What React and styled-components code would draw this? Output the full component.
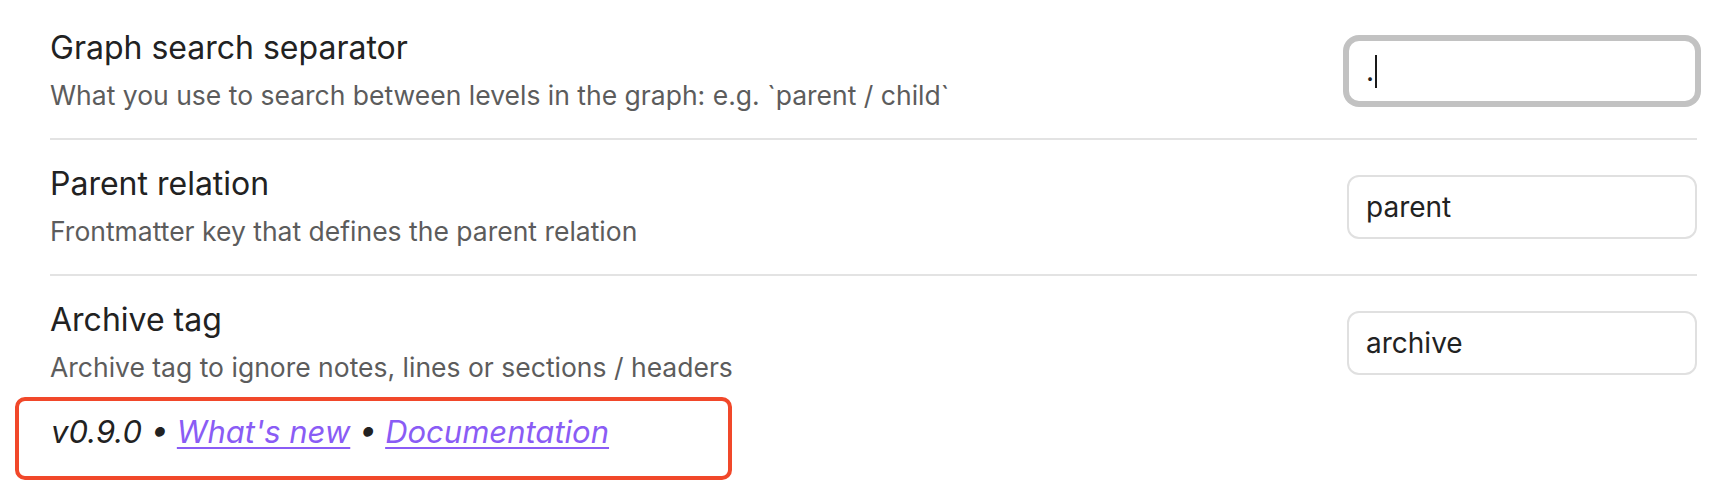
import React from "react";
import styled, { createGlobalStyle } from "styled-components";

const Global = createGlobalStyle`
  html, body { margin: 0; padding: 0; background: #ffffff; }
  body { font-family: Inter, "Noto Sans", sans-serif; -webkit-font-smoothing: antialiased; }
`;

const Page = styled.div`
  padding: 4px 31px 20px 50px;
`;

const Row = styled.div`
  display: flex;
  align-items: center;
  justify-content: space-between;
  padding: 25px 0;
  border-top: ${(p) => (p.$first ? "none" : "2px solid #e3e3e3")};
`;

const Info = styled.div`
  display: flex;
  flex-direction: column;
  gap: 10px;
`;

const Name = styled.div`
  font-size: 32px;
  line-height: 38px;
  color: #222222;
`;

const Desc = styled.div`
  font-size: 26.5px;
  line-height: 36px;
  color: #5c5c5c;
`;

const Field = styled.div`
  box-sizing: border-box;
  width: 350px;
  height: 64px;
  display: flex;
  align-items: center;
  padding: 0 17px;
  border: 2px solid ${(p) => (p.$focused ? "#c2c2c2" : "#e0e0e0")};
  box-shadow: ${(p) => (p.$focused ? "0 0 0 4px #c2c2c2" : "none")};
  border-radius: 12px;
  font-size: 28px;
  color: #222222;
  background: #ffffff;
`;

const Caret = styled.span`
  display: inline-block;
  width: 2px;
  height: 33px;
  background: #1a1a1a;
  margin-left: 1px;
`;

const Footer = styled.div`
  box-sizing: border-box;
  width: 717px;
  height: 83px;
  margin: -13px 0 0 -35px;
  padding: 11px 0 0 32px;
  border: 4px solid #f1482a;
  border-radius: 10px;
  font-size: 31px;
  line-height: 40px;
  font-style: italic;
  color: #222222;
`;

const Link = styled.a`
  color: #8a5cf5;
  text-decoration: underline;
  text-decoration-thickness: 2px;
  text-underline-offset: 4px;
`;

const settings = [
  {
    name: "Graph search separator",
    desc: "What you use to search between levels in the graph: e.g. `parent / child`",
    value: ".",
    focused: true,
  },
  {
    name: "Parent relation",
    desc: "Frontmatter key that defines the parent relation",
    value: "parent",
  },
  {
    name: "Archive tag",
    desc: "Archive tag to ignore notes, lines or sections / headers",
    value: "archive",
  },
];

export default function App() {
  return (
    <>
      <Global />
      <Page>
        {settings.map((s, i) => (
          <Row key={s.name} $first={i === 0}>
            <Info>
              <Name>{s.name}</Name>
              <Desc>{s.desc}</Desc>
            </Info>
            <Field $focused={s.focused}>
              {s.value}
              {s.focused && <Caret />}
            </Field>
          </Row>
        ))}
        <Footer>
          v0.9.0 • <Link href="#">What's new</Link> • <Link href="#">Documentation</Link>
        </Footer>
      </Page>
    </>
  );
}
